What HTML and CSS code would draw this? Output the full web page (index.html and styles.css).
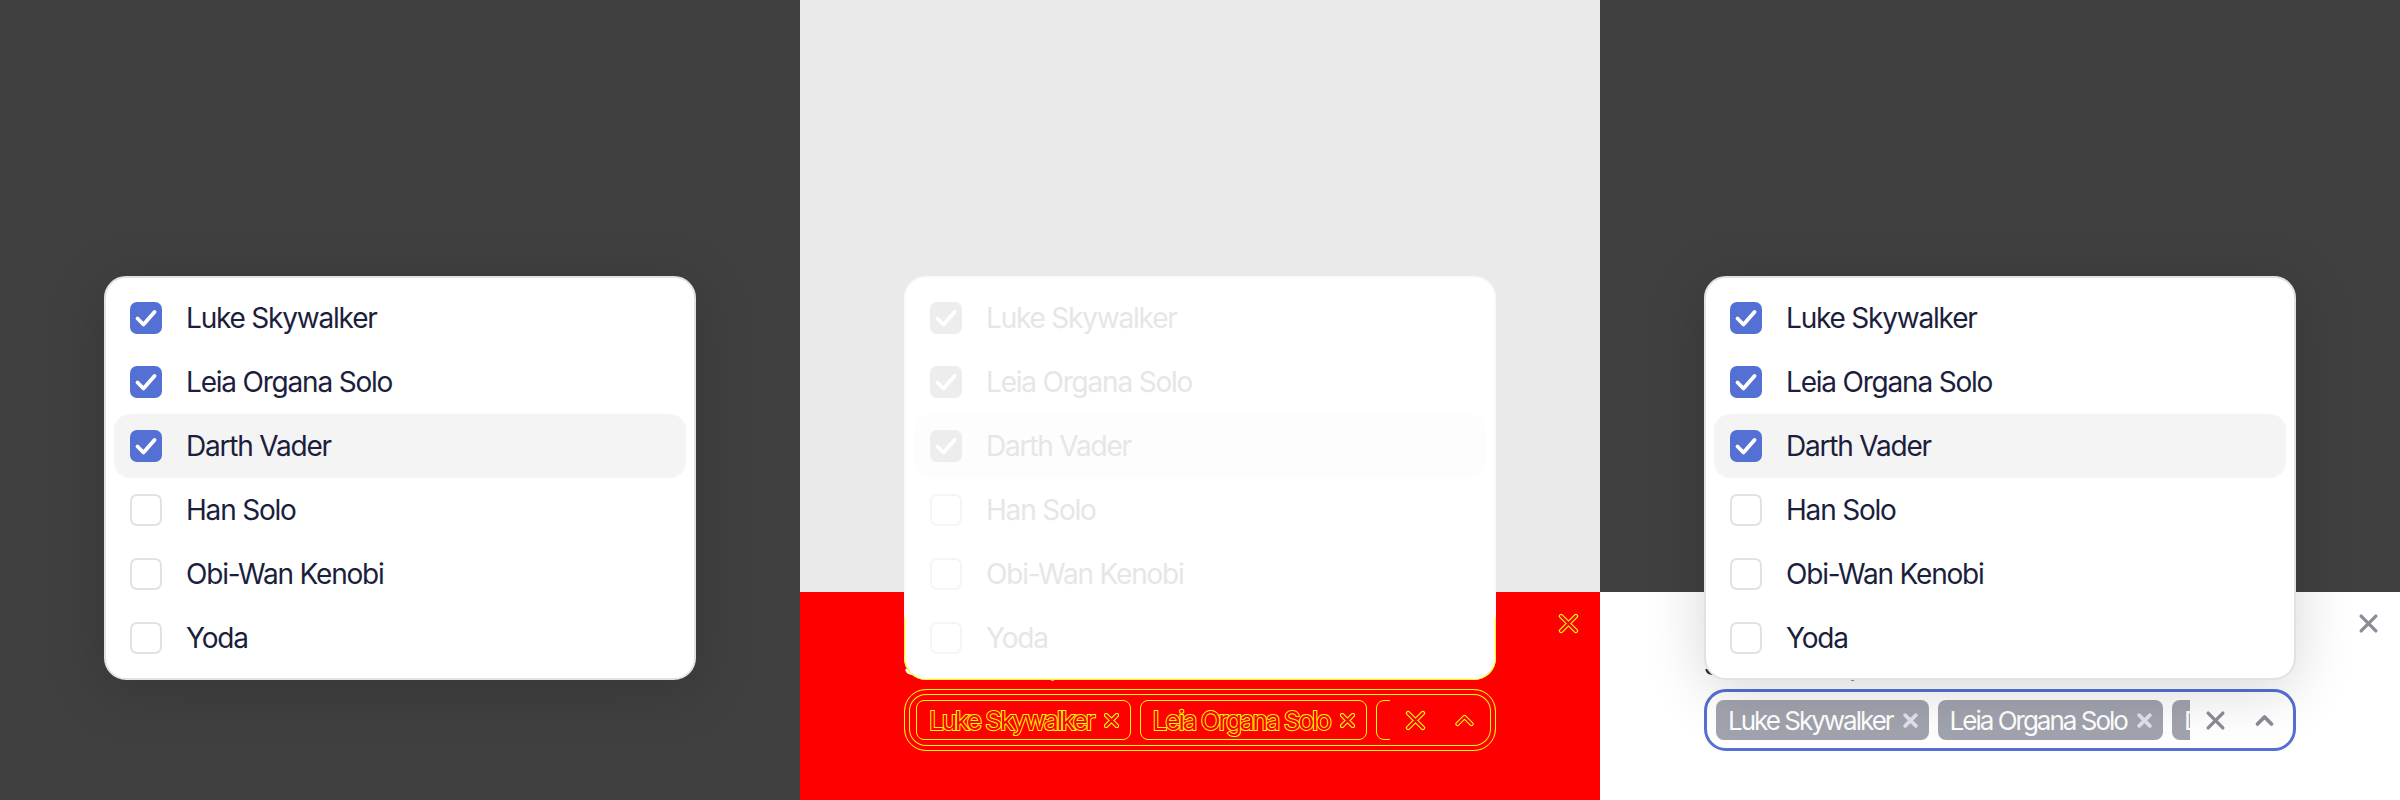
FILE: index.html
```html
<!DOCTYPE html>
<html lang="en">
<head>
<meta charset="utf-8">
<title>Multiselect diff</title>
<link rel="stylesheet" href="styles.css">
</head>
<body>
<div class="stage">

  <!-- Panel 1 -->
  <section class="panel panel--dark">
    <ul class="menu">
      <li class="opt"><span class="cb cb--on"><svg viewBox="0 0 32 32"><path d="M7.5 16.5l6 6 11-12.5"/></svg></span><span class="opt-label">Luke Skywalker</span></li>
      <li class="opt"><span class="cb cb--on"><svg viewBox="0 0 32 32"><path d="M7.5 16.5l6 6 11-12.5"/></svg></span><span class="opt-label">Leia Organa Solo</span></li>
      <li class="opt opt--hover"><span class="cb cb--on"><svg viewBox="0 0 32 32"><path d="M7.5 16.5l6 6 11-12.5"/></svg></span><span class="opt-label">Darth Vader</span></li>
      <li class="opt"><span class="cb"></span><span class="opt-label">Han Solo</span></li>
      <li class="opt"><span class="cb"></span><span class="opt-label">Obi-Wan Kenobi</span></li>
      <li class="opt"><span class="cb"></span><span class="opt-label">Yoda</span></li>
    </ul>
  </section>

  <!-- Panel 2 (diff) -->
  <section class="panel panel--diff">
    <div class="backdrop"></div>
    <div class="sheet">
      <div class="field">
        <div class="field-label">Select multiple</div>
        <div class="input">
          <div class="tags">
            <span class="tag"><span class="tag-text">Luke Skywalker</span><svg class="tag-x" viewBox="0 0 14 14"><path class="o" d="M2 2l10 10M12 2L2 12"/><path class="i" d="M2 2l10 10M12 2L2 12"/></svg></span>
            <span class="tag"><span class="tag-text">Leia Organa Solo</span><svg class="tag-x" viewBox="0 0 14 14"><path class="o" d="M2 2l10 10M12 2L2 12"/><path class="i" d="M2 2l10 10M12 2L2 12"/></svg></span>
            <span class="tag"><span class="tag-text">Darth Vader</span><svg class="tag-x" viewBox="0 0 14 14"><path class="o" d="M2 2l10 10M12 2L2 12"/><path class="i" d="M2 2l10 10M12 2L2 12"/></svg></span>
          </div>
          <div class="controls">
            <svg class="clear" viewBox="0 0 20 20"><path class="o" d="M3 3l14 14M17 3L3 17"/><path class="i" d="M3 3l14 14M17 3L3 17"/></svg>
            <svg class="chev" viewBox="0 0 20 14"><path class="o" d="M3 11l7-7 7 7"/><path class="i" d="M3 11l7-7 7 7"/></svg>
          </div>
        </div>
      </div>
      <svg class="sheet-close" viewBox="0 0 20 20"><path class="o" d="M3 3l14 14M17 3L3 17"/><path class="i" d="M3 3l14 14M17 3L3 17"/></svg>
    </div>
    <ul class="menu">
      <li class="opt"><span class="cb cb--on"><svg viewBox="0 0 32 32"><path d="M7.5 16.5l6 6 11-12.5"/></svg></span><span class="opt-label">Luke Skywalker</span></li>
      <li class="opt"><span class="cb cb--on"><svg viewBox="0 0 32 32"><path d="M7.5 16.5l6 6 11-12.5"/></svg></span><span class="opt-label">Leia Organa Solo</span></li>
      <li class="opt opt--hover"><span class="cb cb--on"><svg viewBox="0 0 32 32"><path d="M7.5 16.5l6 6 11-12.5"/></svg></span><span class="opt-label">Darth Vader</span></li>
      <li class="opt"><span class="cb"></span><span class="opt-label">Han Solo</span></li>
      <li class="opt"><span class="cb"></span><span class="opt-label">Obi-Wan Kenobi</span></li>
      <li class="opt"><span class="cb"></span><span class="opt-label">Yoda</span></li>
    </ul>
  </section>

  <!-- Panel 3 -->
  <section class="panel panel--live">
    <div class="backdrop"></div>
    <div class="sheet">
      <div class="field">
        <div class="field-label">Select multiple</div>
        <div class="input">
          <div class="tags">
            <span class="tag"><span class="tag-text">Luke Skywalker</span><svg class="tag-x" viewBox="0 0 14 14"><path class="i" d="M2 2l10 10M12 2L2 12"/></svg></span>
            <span class="tag"><span class="tag-text">Leia Organa Solo</span><svg class="tag-x" viewBox="0 0 14 14"><path class="i" d="M2 2l10 10M12 2L2 12"/></svg></span>
            <span class="tag"><span class="tag-text">Darth Vader</span><svg class="tag-x" viewBox="0 0 14 14"><path class="i" d="M2 2l10 10M12 2L2 12"/></svg></span>
          </div>
          <div class="controls">
            <svg class="clear" viewBox="0 0 20 20"><path class="i" d="M3 3l14 14M17 3L3 17"/></svg>
            <svg class="chev" viewBox="0 0 20 14"><path class="i" d="M3 11l7-7 7 7"/></svg>
          </div>
        </div>
      </div>
      <svg class="sheet-close" viewBox="0 0 20 20"><path class="i" d="M3 3l14 14M17 3L3 17"/></svg>
    </div>
    <ul class="menu">
      <li class="opt"><span class="cb cb--on"><svg viewBox="0 0 32 32"><path d="M7.5 16.5l6 6 11-12.5"/></svg></span><span class="opt-label">Luke Skywalker</span></li>
      <li class="opt"><span class="cb cb--on"><svg viewBox="0 0 32 32"><path d="M7.5 16.5l6 6 11-12.5"/></svg></span><span class="opt-label">Leia Organa Solo</span></li>
      <li class="opt opt--hover"><span class="cb cb--on"><svg viewBox="0 0 32 32"><path d="M7.5 16.5l6 6 11-12.5"/></svg></span><span class="opt-label">Darth Vader</span></li>
      <li class="opt"><span class="cb"></span><span class="opt-label">Han Solo</span></li>
      <li class="opt"><span class="cb"></span><span class="opt-label">Obi-Wan Kenobi</span></li>
      <li class="opt"><span class="cb"></span><span class="opt-label">Yoda</span></li>
    </ul>
  </section>

</div>
</body>
</html>
```

FILE: styles.css
```css
* { box-sizing: border-box; }

html, body {
  margin: 0;
  padding: 0;
  background: #404040;
}

body {
  font-family: Inter, "Noto Sans", "Liberation Sans", sans-serif;
  color: #1b1e3c;
}

.stage {
  display: flex;
  width: 2400px;
  height: 800px;
}

.panel {
  position: relative;
  width: 800px;
  height: 800px;
  flex: 0 0 800px;
  display: flex;
  flex-direction: column;
  overflow: hidden;
}

.panel--dark { background: #404040; }

.backdrop { flex: 0 0 592px; }
.panel--diff .backdrop { background: #eaeaea; }
.panel--live .backdrop { background: #404040; }

.sheet {
  flex: 1;
  display: grid;
  grid-template-columns: 104px 592px 1fr;
  align-items: start;
}
.panel--live .sheet { background: #ffffff; }
.panel--diff .sheet { background: #ff0000; }

/* ---------- field ---------- */
.field {
  grid-column: 2;
  margin-top: 53px;
}

.field-label {
  font-size: 28px;
  line-height: 40px;
  font-weight: 500;
  letter-spacing: -1px;
  margin-bottom: 4px;
  color: #1b1e3c;
}
.panel--diff .field-label { color: #ffffff; }

.input {
  height: 62px;
  border: 3px solid #5470d5;
  border-radius: 22px;
  background: #ffffff;
  display: flex;
  align-items: center;
  padding: 0 18px 0 9px;
}

.tags {
  flex: 1;
  min-width: 0;
  display: flex;
  gap: 9px;
  overflow: hidden;
  height: 40px;
}

.tag {
  flex: 0 0 auto;
  height: 40px;
  display: flex;
  align-items: center;
  gap: 10px;
  padding: 0 11px 0 12px;
  border-radius: 8px;
  background: #a1a3ae;
  color: #ffffff;
  font-size: 26px;
  letter-spacing: -2px;
}

.tag-x {
  width: 15px;
  height: 15px;
  display: block;
}

.controls {
  flex: 0 0 auto;
  display: flex;
  align-items: center;
  gap: 28px;
  padding-left: 15px;
}

.clear { width: 21px; height: 21px; display: block; }
.chev { width: 21px; height: 14px; display: block; }

.sheet-close {
  grid-column: 3;
  justify-self: end;
  width: 21px;
  height: 21px;
  margin: 21px 21px 0 0;
  display: block;
}

svg path {
  fill: none;
  stroke-linecap: round;
  stroke-linejoin: round;
}

.panel--live .tag-x .i { stroke: #e1e2e7; stroke-width: 3.4; }
.panel--live .clear .i,
.panel--live .sheet-close .i { stroke: #8a8c98; stroke-width: 3.2; }
.panel--live .chev .i { stroke: #8a8c98; stroke-width: 3.8; }

/* diff styling: yellow outlines on red */
.panel--diff .input {
  background: transparent;
  border: 1px solid #ffff00;
  box-shadow: inset 0 0 0 4px #ff0000, inset 0 0 0 5px #ffff00;
  padding-left: 11px;
  padding-right: 20px;
}
.panel--diff .tag {
  background: transparent;
  border: 1px solid #ffff00;
  color: #ff0000;
  -webkit-text-stroke: 2px #ffff00;
  paint-order: stroke fill;
}
.panel--diff svg .o { stroke: #ffff00; stroke-width: 4.4; }
.panel--diff svg .i { stroke: #ff0000; stroke-width: 2.2; }

/* ---------- menu ---------- */
.menu {
  position: absolute;
  left: 104px;
  top: 276px;
  width: 592px;
  margin: 0;
  padding: 8px;
  list-style: none;
  background: #ffffff;
  border: 2px solid #e2e2e2;
  border-radius: 22px;
  box-shadow: 0 10px 60px rgba(0, 0, 0, 0.16);
}

.opt {
  height: 64px;
  display: flex;
  align-items: center;
  gap: 24px;
  padding-left: 16px;
  border-radius: 16px;
  font-size: 28px;
  letter-spacing: -1.2px;
  color: #1b1e3c;
}

.opt--hover { background: #f4f4f4; }

.cb {
  width: 32px;
  height: 32px;
  flex: 0 0 32px;
  border-radius: 7px;
  border: 2px solid #e2e2e2;
  background: #ffffff;
  display: flex;
}

.cb--on {
  border: none;
  background: #5470d5;
}

.cb svg {
  width: 32px;
  height: 32px;
  display: block;
}

.cb svg path {
  stroke: #ffffff;
  stroke-width: 3.8;
}

/* diff menu: faded */
.panel--diff .menu {
  box-shadow: none;
  border-color: #fafafa;
}
.panel--diff .menu::after {
  content: "";
  position: absolute;
  left: -2px;
  right: -2px;
  top: 339px;
  bottom: -2px;
  border: 1px solid #ffff00;
  border-top: none;
  border-radius: 0 0 22px 22px;
}
.panel--diff .opt { color: #e6e6e6; }
.panel--diff .opt--hover { background: #fdfdfd; }
.panel--diff .cb { border-color: #f5f5f5; }
.panel--diff .cb--on { background: #ededed; }
```
